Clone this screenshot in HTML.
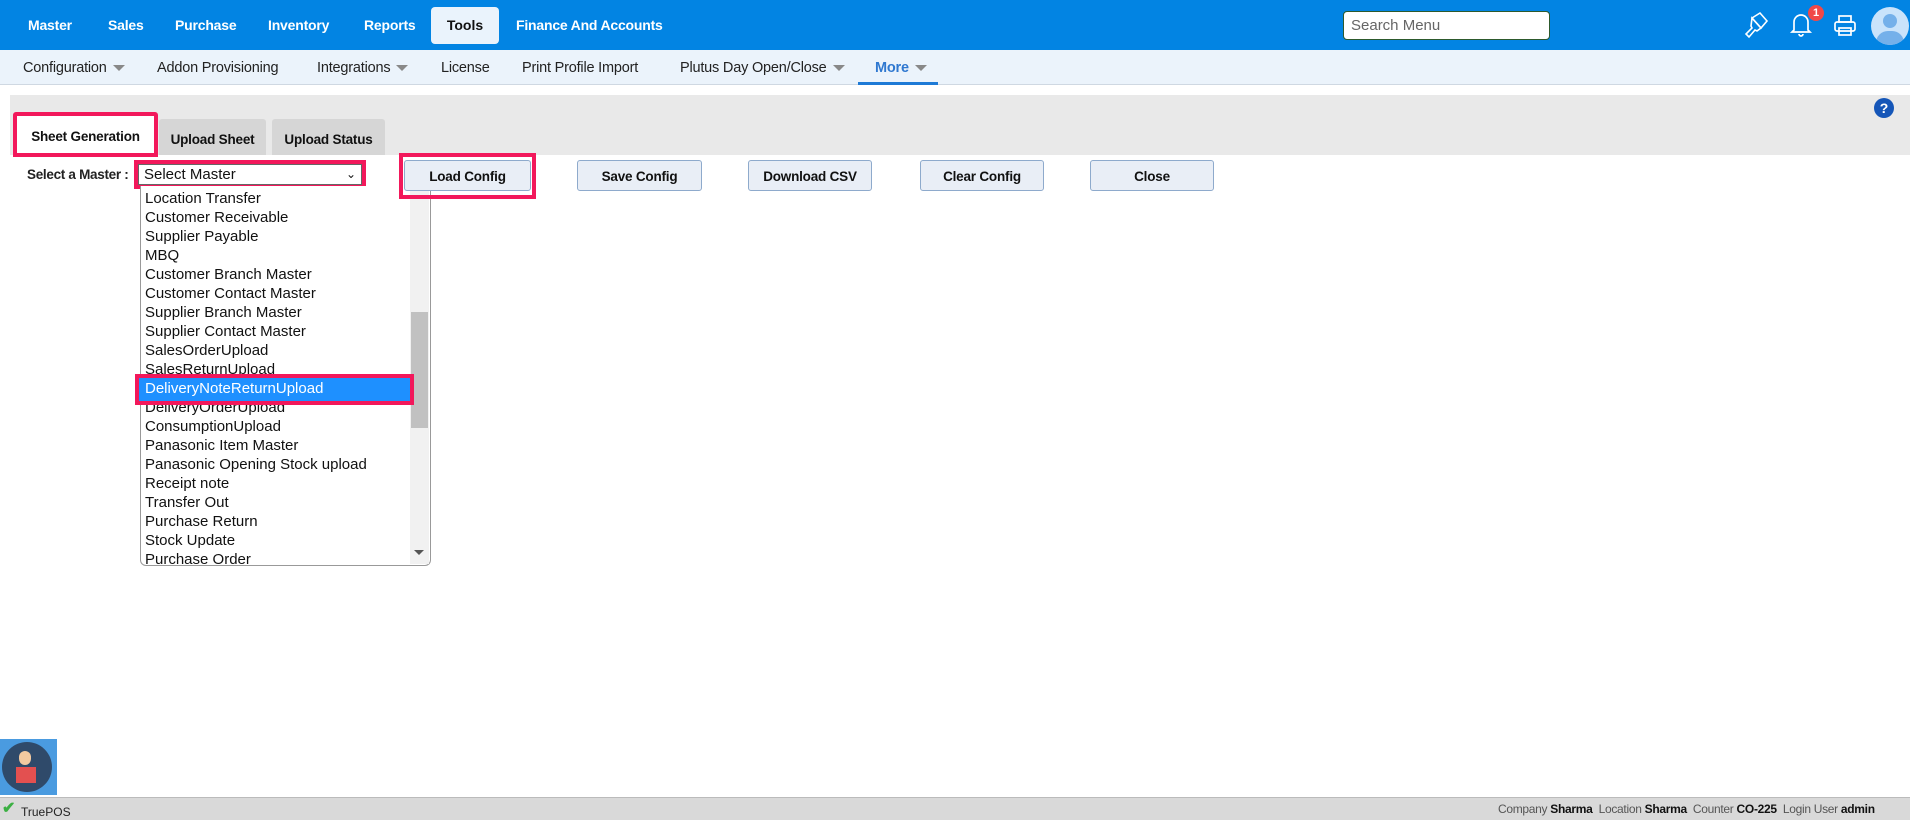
<!DOCTYPE html>
<html><head><style>
*{box-sizing:border-box;margin:0;padding:0}
body{width:1910px;height:820px;position:relative;overflow:hidden;font-family:"Liberation Sans",sans-serif;background:#fff}
.a{position:absolute}
.top{left:0;top:0;width:1910px;height:50px;background:#0284e3}
.nav{color:#fff;font-weight:bold;font-size:14px;top:17px;letter-spacing:-0.2px}
.tools{left:431px;top:7px;width:68px;height:37px;background:#eaf3fc;border-radius:4px;color:#111;font-weight:bold;font-size:14px;text-align:center;line-height:37px}
.sub{left:0;top:50px;width:1910px;height:35px;background:#ebf3fb;border-bottom:1px solid #cfd8e2}
.sn{top:60px;font-size:14.5px;color:#222;letter-spacing:-0.2px}
.car{display:inline-block;width:0;height:0;border-left:6px solid transparent;border-right:6px solid transparent;border-top:6px solid #888;margin-left:6px;vertical-align:middle}
.gray{left:10px;top:95px;width:1900px;height:60px;background:#e9e9e9}
.tab{top:119px;height:36px;background:#d6d6d6;font-weight:bold;font-size:13.5px;color:#111;text-align:center;line-height:42px;border-radius:3px 3px 0 0;letter-spacing:-0.2px}
.btn{top:160px;height:31px;background:#e9eef6;border:1px solid #8eaacc;border-radius:3px;font-weight:bold;font-size:13.5px;color:#111;text-align:center;line-height:32px;letter-spacing:-0.2px}
.red{border:4px solid #f2185b}
.it{left:145px;font-size:15px;color:#111;height:19px;line-height:19px}
</style></head><body>
<div class="a top"></div>
<div class="a nav" style="left:28px">Master</div>
<div class="a nav" style="left:108px">Sales</div>
<div class="a nav" style="left:175px">Purchase</div>
<div class="a nav" style="left:268px">Inventory</div>
<div class="a nav" style="left:364px">Reports</div>
<div class="a tools">Tools</div>
<div class="a nav" style="left:516px">Finance And Accounts</div>
<div class="a" style="left:1343px;top:11px;width:207px;height:29px;background:#fff;border:1px solid #2d5a2d;border-radius:4px;font-size:15px;color:#666;padding:5px 7px">Search Menu</div>
<svg class="a" style="left:1740px;top:10px" width="30" height="30" viewBox="0 0 30 30" fill="none" stroke="#fff" stroke-width="1.6"><path d="M12 8l8-5 7 8-6 7z"/><path d="M12 8l9 10-4 3-2-1-6 7-3-3 6-6-1-2z"/></svg>
<svg class="a" style="left:1788px;top:10px" width="26" height="28" viewBox="0 0 26 28" fill="none" stroke="#fff" stroke-width="1.7"><path d="M6 20V12a7 7 0 0114 0v8l2 2H4z"/><path d="M11 24a2 2 0 004 0"/></svg>
<div class="a" style="left:1808px;top:5px;width:16px;height:16px;border-radius:8px;background:#f04848;color:#fff;font-size:11px;font-weight:bold;text-align:center;line-height:16px">1</div>
<svg class="a" style="left:1832px;top:14px" width="26" height="24" viewBox="0 0 26 24" fill="none" stroke="#fff" stroke-width="1.7"><rect x="7" y="2" width="12" height="6"/><rect x="3" y="8" width="20" height="9" rx="2"/><rect x="7" y="14" width="12" height="7"/></svg>
<div class="a" style="left:1871px;top:7px;width:38px;height:38px;border-radius:19px;background:#c9e3fb;overflow:hidden"><div class="a" style="left:12px;top:7px;width:14px;height:14px;border-radius:7px;background:#74b0ea"></div><div class="a" style="left:5px;top:24px;width:28px;height:24px;border-radius:14px;background:#74b0ea"></div></div>
<div class="a sub"></div>
<div class="a sn" style="left:23px">Configuration<span class="car"></span></div>
<div class="a sn" style="left:157px">Addon Provisioning</div>
<div class="a sn" style="left:317px">Integrations<span class="car"></span></div>
<div class="a sn" style="left:441px">License</div>
<div class="a sn" style="left:522px">Print Profile Import</div>
<div class="a sn" style="left:680px">Plutus Day Open/Close<span class="car"></span></div>
<div class="a sn" style="left:875px;color:#2f78d0;font-weight:bold">More<span class="car"></span></div>
<div class="a" style="left:858px;top:82px;width:80px;height:3px;background:#1e7ad6"></div>
<div class="a gray"></div>
<div class="a" style="left:1874px;top:98px;width:20px;height:20px;border-radius:10px;background:#1556b8;color:#fff;font-weight:bold;font-size:14px;text-align:center;line-height:20px">?</div>
<div class="a tab red" style="left:13px;top:112px;width:145px;height:45px;background:#fff;line-height:42px">Sheet Generation</div>
<div class="a tab" style="left:159px;width:107px">Upload Sheet</div>
<div class="a tab" style="left:272px;width:113px">Upload Status</div>
<div class="a" style="left:27px;top:167px;font-size:13.5px;font-weight:bold;color:#222;letter-spacing:-0.3px">Select a Master :</div>
<div class="a red" style="left:134px;top:160px;width:232px;height:29px;background:#fff;border-width:4px"><div style="font-size:15px;color:#111;padding:0 5px;border:1px solid #666;height:21px;line-height:19px">Select Master<span style="float:right;font-size:12px">&#8964;</span></div></div>
<div class="a" style="left:140px;top:186px;width:291px;height:380px;border:1px solid #999;border-radius:0 0 6px 6px;background:#fff;border-top:none"></div>
<div class="a" style="left:410px;top:186px;width:19px;height:378px;background:#f1f1f1"></div>
<div class="a" style="left:411px;top:312px;width:17px;height:116px;background:#c1c1c1"></div>
<div class="a" style="left:414px;top:550px;border-left:5px solid transparent;border-right:5px solid transparent;border-top:5px solid #555"></div>
<div class="a it" style="top:189px">Location Transfer</div>
<div class="a it" style="top:208px">Customer Receivable</div>
<div class="a it" style="top:227px">Supplier Payable</div>
<div class="a it" style="top:246px">MBQ</div>
<div class="a it" style="top:265px">Customer Branch Master</div>
<div class="a it" style="top:284px">Customer Contact Master</div>
<div class="a it" style="top:303px">Supplier Branch Master</div>
<div class="a it" style="top:322px">Supplier Contact Master</div>
<div class="a it" style="top:341px">SalesOrderUpload</div>
<div class="a it" style="top:360px">SalesReturnUpload</div>
<div class="a it" style="top:398px">DeliveryOrderUpload</div>
<div class="a red" style="left:135px;top:374px;width:279px;height:31px;background:#1e90ff"><div style="color:#fff;font-size:15px;padding-left:6px;line-height:21px">DeliveryNoteReturnUpload</div></div>
<div class="a it" style="top:417px">ConsumptionUpload</div>
<div class="a it" style="top:436px">Panasonic Item Master</div>
<div class="a it" style="top:455px">Panasonic Opening Stock upload</div>
<div class="a it" style="top:474px">Receipt note</div>
<div class="a it" style="top:493px">Transfer Out</div>
<div class="a it" style="top:512px">Purchase Return</div>
<div class="a it" style="top:531px">Stock Update</div>
<div class="a it" style="top:550px;height:16px;overflow:hidden">Purchase Order</div>
<div class="a red" style="left:399px;top:153px;width:137px;height:46px"></div>
<div class="a btn" style="left:404px;width:127px">Load Config</div>
<div class="a btn" style="left:577px;width:125px">Save Config</div>
<div class="a btn" style="left:748px;width:124px">Download CSV</div>
<div class="a btn" style="left:920px;width:124px">Clear Config</div>
<div class="a btn" style="left:1090px;width:124px">Close</div>
<div class="a" style="left:0;top:739px;width:57px;height:56px;background:#4a9be0"><div class="a" style="left:2px;top:3px;width:50px;height:50px;border-radius:25px;background:#2f4a6a"></div><div class="a" style="left:16px;top:28px;width:20px;height:16px;background:#e35050"></div><div class="a" style="left:19px;top:12px;width:12px;height:14px;border-radius:6px;background:#f2c9a0"></div></div>
<div class="a" style="left:0;top:797px;width:1910px;height:23px;background:#d9d9d9;border-top:1px solid #bbb"></div>
<div class="a" style="left:2px;top:798px;color:#3cb043;font-size:16px;font-weight:bold">&#10004;</div>
<div class="a" style="left:21px;top:805px;font-size:12px;color:#222">TruePOS</div>
<div class="a" style="left:1498px;top:802px;font-size:12px;color:#555;letter-spacing:-0.3px">Company <b style="color:#111">Sharma</b> &nbsp;Location <b style="color:#111">Sharma</b> &nbsp;Counter <b style="color:#111">CO-225</b> &nbsp;Login User <b style="color:#111">admin</b></div>
</body></html>
